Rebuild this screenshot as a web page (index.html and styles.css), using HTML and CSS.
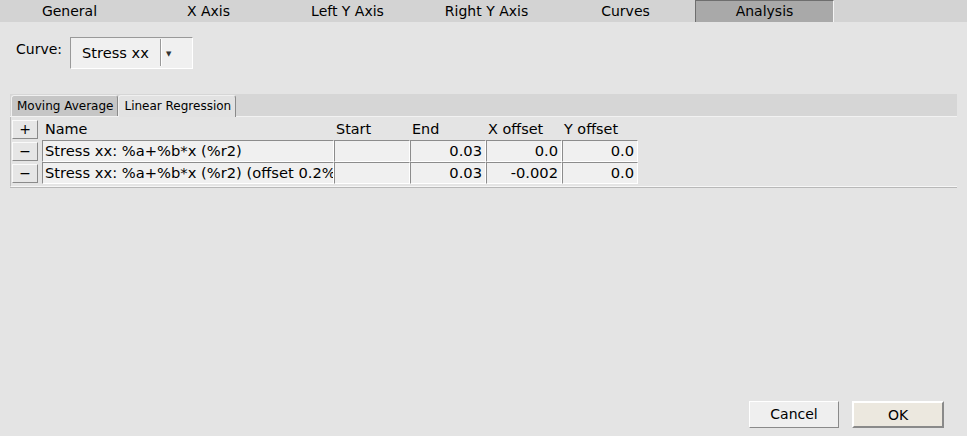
FILE: index.html
```html
<!DOCTYPE html>
<html>
<head>
<meta charset="utf-8">
<link rel="stylesheet" href="styles.css">
</head>
<body>
<div class="window">
  <div class="tabbar">
    <div class="tab">General</div>
    <div class="tab">X Axis</div>
    <div class="tab">Left Y Axis</div>
    <div class="tab">Right Y Axis</div>
    <div class="tab">Curves</div>
    <div class="tab active">Analysis</div>
  </div>
  <div class="curve-row">
    <span class="curve-label">Curve:</span>
    <div class="choice">
      <span class="choice-text">Stress xx</span>
      <span class="choice-arrow">▼</span>
    </div>
  </div>
  <div class="subpanel">
    <div class="subtabs">
      <div class="subtab">Moving Average</div>
      <div class="subtab selected">Linear Regression</div>
    </div>
    <div class="table">
      <div class="row header">
        <div class="btn">+</div>
        <div class="hcell c-name">Name</div>
        <div class="hcell c-num">Start</div>
        <div class="hcell c-num">End</div>
        <div class="hcell c-num">X offset</div>
        <div class="hcell c-num">Y offset</div>
      </div>
      <div class="row">
        <div class="btn">−</div>
        <div class="cell c-name">Stress xx: %a+%b*x (%r2)</div>
        <div class="cell c-num"></div>
        <div class="cell c-num num">0.03</div>
        <div class="cell c-num num">0.0</div>
        <div class="cell c-num num">0.0</div>
      </div>
      <div class="row">
        <div class="btn">−</div>
        <div class="cell c-name">Stress xx: %a+%b*x (%r2) (offset 0.2%)</div>
        <div class="cell c-num"></div>
        <div class="cell c-num num">0.03</div>
        <div class="cell c-num num">-0.002</div>
        <div class="cell c-num num">0.0</div>
      </div>
    </div>
  </div>
  <div class="footer">
    <div class="button cancel">Cancel</div>
    <div class="button ok">OK</div>
  </div>
</div>
</body>
</html>
```
FILE: styles.css
```css
html, body {
  margin: 0;
  padding: 0;
}
body {
  width: 967px;
  height: 436px;
  background: #e4e4e4;
  font-family: "DejaVu Sans", sans-serif;
  font-size: 14px;
  color: #000;
  overflow: hidden;
}
.window {
  display: flex;
  flex-direction: column;
  height: 436px;
}
.tabbar {
  display: flex;
  height: 22px;
  background: #d3d3d3;
}
.tab {
  width: 139px;
  height: 22px;
  line-height: 23px;
  text-align: center;
  box-sizing: border-box;
}
.tab.active {
  background: #a9a9a9;
  border-top: 1px solid #6e6e6e;
  border-left: 1px solid #6e6e6e;
  border-right: 1px solid #f4f4f4;
  line-height: 21px;
}
.curve-row {
  display: flex;
  align-items: flex-start;
  margin-top: 15px;
  padding-left: 16px;
}
.curve-label {
  margin-top: 4px;
  margin-right: 8px;
}
.choice {
  display: flex;
  width: 123px;
  height: 32px;
  box-sizing: border-box;
  background: #f0f0f0;
  border-top: 1px solid #999;
  border-left: 1px solid #999;
  border-right: 1px solid #fff;
  border-bottom: 1px solid #fff;
}
.choice-text {
  width: 90px;
  padding-left: 11px;
  line-height: 28px;
  font-size: 14.6px;
  box-sizing: border-box;
  border-right: 1px solid #999;
  margin: 1px 0 2px 0;
}
.choice-arrow {
  flex: 1;
  font-size: 7px;
  line-height: 30px;
  padding-left: 4px;
  color: #333;
  border-left: 1px solid #fff;
  margin: 1px 0 2px 0;
}
.subpanel {
  margin: 25px 10px 0 10px;
}
.subtabs {
  display: flex;
  height: 23px;
  background: #d6d6d6;
  padding-left: 1px;
  align-items: flex-end;
  border-bottom: 1px solid #f2f2f2;
  box-sizing: border-box;
}
.subtab {
  font-size: 12px;
  height: 21px;
  line-height: 21px;
  padding: 0 4px 0 5px;
  box-sizing: border-box;
  background: #c6c6c6;
  border-top: 1px solid #f0f0f0;
  border-left: 1px solid #f0f0f0;
  border-right: 1px solid #8a8a8a;
  border-radius: 3px 3px 0 0;
}
.subtab.selected {
  background: #e2e2e2;
  height: 22px;
  margin-bottom: -1px;
  padding: 0 4px 0 5px;
}
.table {
  padding-top: 1px;
  border-left: 1px solid #bdbdbd;
  border-bottom: 1px solid #f6f6f6;
  box-shadow: 0 1px 0 #b8b8b8;
  padding-bottom: 2px;
}
.row {
  display: flex;
  height: 22px;
  align-items: stretch;
}
.btn {
  width: 26px;
  height: 19px;
  margin: 2px 4px 1px 1px;
  box-sizing: border-box;
  background: #e6e6e6;
  border-top: 1px solid #fafafa;
  border-left: 1px solid #fafafa;
  border-right: 1px solid #8a8a8a;
  border-bottom: 1px solid #8a8a8a;
  text-align: center;
  line-height: 16px;
  font-size: 14px;
}
.hcell {
  line-height: 22px;
  padding-left: 3px;
  box-sizing: border-box;
  font-size: 14.4px;
}
.hcell.c-num {
  padding-left: 2px;
}
.c-name {
  width: 292px;
}
.c-num {
  width: 76px;
}
.cell {
  background: #f0f0f0;
  box-sizing: border-box;
  border-top: 1px solid #8c8c8c;
  border-left: 1px solid #8c8c8c;
  border-right: 1px solid #fff;
  border-bottom: 1px solid #fff;
  line-height: 20px;
  font-size: 14.7px;
  padding-left: 2px;
  white-space: nowrap;
  overflow: hidden;
}
.cell.num {
  text-align: right;
  padding-right: 3px;
}
.footer {
  margin-top: auto;
  display: flex;
  justify-content: flex-end;
  gap: 13px;
  padding: 0 23px 8px 0;
}
.button {
  height: 27px;
  line-height: 25px;
  text-align: center;
  box-sizing: border-box;
  border-top: 1px solid #fff;
  border-left: 1px solid #fff;
  border-right: 2px solid #8a8a8a;
  border-bottom: 2px solid #8a8a8a;
}
.cancel {
  width: 90px;
  background: #efefef;
  border-right-width: 1px;
  border-bottom-width: 1px;
}
.ok {
  width: 92px;
  background: #ece8df;
  border-top-width: 2px;
  border-left-width: 2px;
}
```
